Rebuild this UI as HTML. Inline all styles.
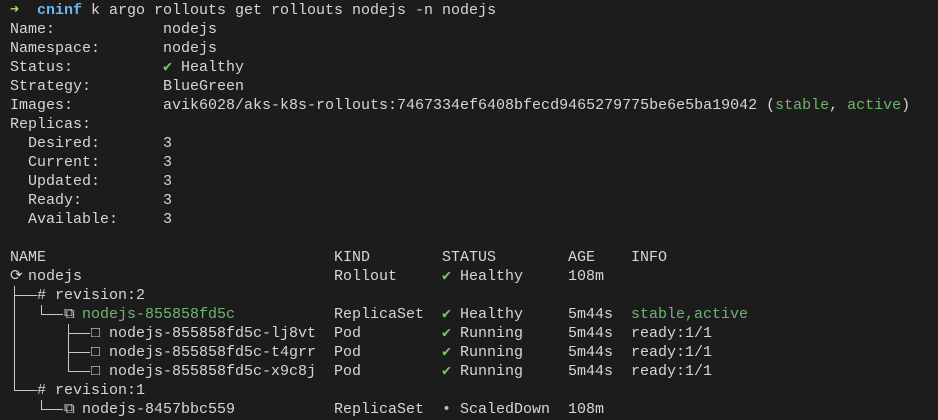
<!DOCTYPE html>
<html><head><meta charset="utf-8"><style>
html,body{margin:0;padding:0;background:#1c1c1c;}
body{width:938px;height:420px;overflow:hidden;font-family:"Liberation Mono","DejaVu Sans Mono",monospace;font-size:15px;color:#d6d6d6;position:relative;}
.wrap{padding-top:1px;}
.l{position:relative;height:19px;line-height:19px;white-space:pre;}
.l span{position:absolute;top:0;}
.g{color:#6fb56f;}
.ck{color:#7cc46a;}
.gr{color:#bdbdbd;}
.v{position:absolute;width:1px;background:#c8c8c8;}
.h{position:absolute;height:1px;background:#c8c8c8;}
</style></head><body>
<div class="wrap">
<div class="l"><span style="left:10px;color:#9be85a;font-weight:bold">➜</span><span style="left:37px;color:#6cb8ee;font-weight:bold">cninf</span><span style="left:91px">k argo rollouts get rollouts nodejs -n nodejs</span></div>
<div class="l"><span style="left:10px">Name:</span><span style="left:163px">nodejs</span></div>
<div class="l"><span style="left:10px">Namespace:</span><span style="left:163px">nodejs</span></div>
<div class="l"><span style="left:10px">Status:</span><span style="left:163px" class="ck">✔</span><span style="left:181px">Healthy</span></div>
<div class="l"><span style="left:10px">Strategy:</span><span style="left:163px">BlueGreen</span></div>
<div class="l"><span style="left:10px">Images:</span><span style="left:163px">avik6028/aks-k8s-rollouts:7467334ef6408bfecd9465279775be6e5ba19042 (<span class="g" style="position:static">stable</span>, <span class="g" style="position:static">active</span>)</span></div>
<div class="l"><span style="left:10px">Replicas:</span></div>
<div class="l"><span style="left:28px">Desired:</span><span style="left:163px">3</span></div>
<div class="l"><span style="left:28px">Current:</span><span style="left:163px">3</span></div>
<div class="l"><span style="left:28px">Updated:</span><span style="left:163px">3</span></div>
<div class="l"><span style="left:28px">Ready:</span><span style="left:163px">3</span></div>
<div class="l"><span style="left:28px">Available:</span><span style="left:163px">3</span></div>
<div class="l"></div>
<div class="l"><span style="left:10px">NAME</span><span style="left:334px">KIND</span><span style="left:442px">STATUS</span><span style="left:568px">AGE</span><span style="left:631px">INFO</span></div>
<div class="l"><span style="left:10px">⟳</span><span style="left:28px">nodejs</span><span style="left:334px">Rollout</span><span style="left:442px" class="ck">✔</span><span style="left:460px">Healthy</span><span style="left:568px">108m</span></div>
<div class="l"><span style="left:37px">#</span><span style="left:55px">revision:2</span></div>
<div class="l"><span style="left:64px">⧉</span><span style="left:82px" class="g">nodejs-855858fd5c</span><span style="left:334px">ReplicaSet</span><span style="left:442px" class="ck">✔</span><span style="left:460px">Healthy</span><span style="left:568px">5m44s</span><span style="left:631px" class="g">stable,active</span></div>
<div class="l"><span style="left:91px">□</span><span style="left:109px">nodejs-855858fd5c-lj8vt</span><span style="left:334px">Pod</span><span style="left:442px" class="ck">✔</span><span style="left:460px">Running</span><span style="left:568px">5m44s</span><span style="left:631px">ready:1/1</span></div>
<div class="l"><span style="left:91px">□</span><span style="left:109px">nodejs-855858fd5c-t4grr</span><span style="left:334px">Pod</span><span style="left:442px" class="ck">✔</span><span style="left:460px">Running</span><span style="left:568px">5m44s</span><span style="left:631px">ready:1/1</span></div>
<div class="l"><span style="left:91px">□</span><span style="left:109px">nodejs-855858fd5c-x9c8j</span><span style="left:334px">Pod</span><span style="left:442px" class="ck">✔</span><span style="left:460px">Running</span><span style="left:568px">5m44s</span><span style="left:631px">ready:1/1</span></div>
<div class="l"><span style="left:37px">#</span><span style="left:55px">revision:1</span></div>
<div class="l"><span style="left:64px">⧉</span><span style="left:82px">nodejs-8457bbc559</span><span style="left:334px">ReplicaSet</span><span style="left:442px" class="gr">•</span><span style="left:460px">ScaledDown</span><span style="left:568px">108m</span></div>
</div>
<!-- tree lines -->
<div class="v" style="left:14px;top:286px;height:105px"></div>
<div class="h" style="left:14px;top:295px;width:23px"></div>
<div class="h" style="left:14px;top:390px;width:23px"></div>
<div class="v" style="left:41px;top:305px;height:10px"></div>
<div class="h" style="left:41px;top:314px;width:22px"></div>
<div class="v" style="left:68px;top:324px;height:48px"></div>
<div class="h" style="left:68px;top:333px;width:22px"></div>
<div class="h" style="left:68px;top:352px;width:22px"></div>
<div class="h" style="left:68px;top:371px;width:22px"></div>
<div class="v" style="left:41px;top:400px;height:10px"></div>
<div class="h" style="left:41px;top:409px;width:22px"></div>
</body></html>
